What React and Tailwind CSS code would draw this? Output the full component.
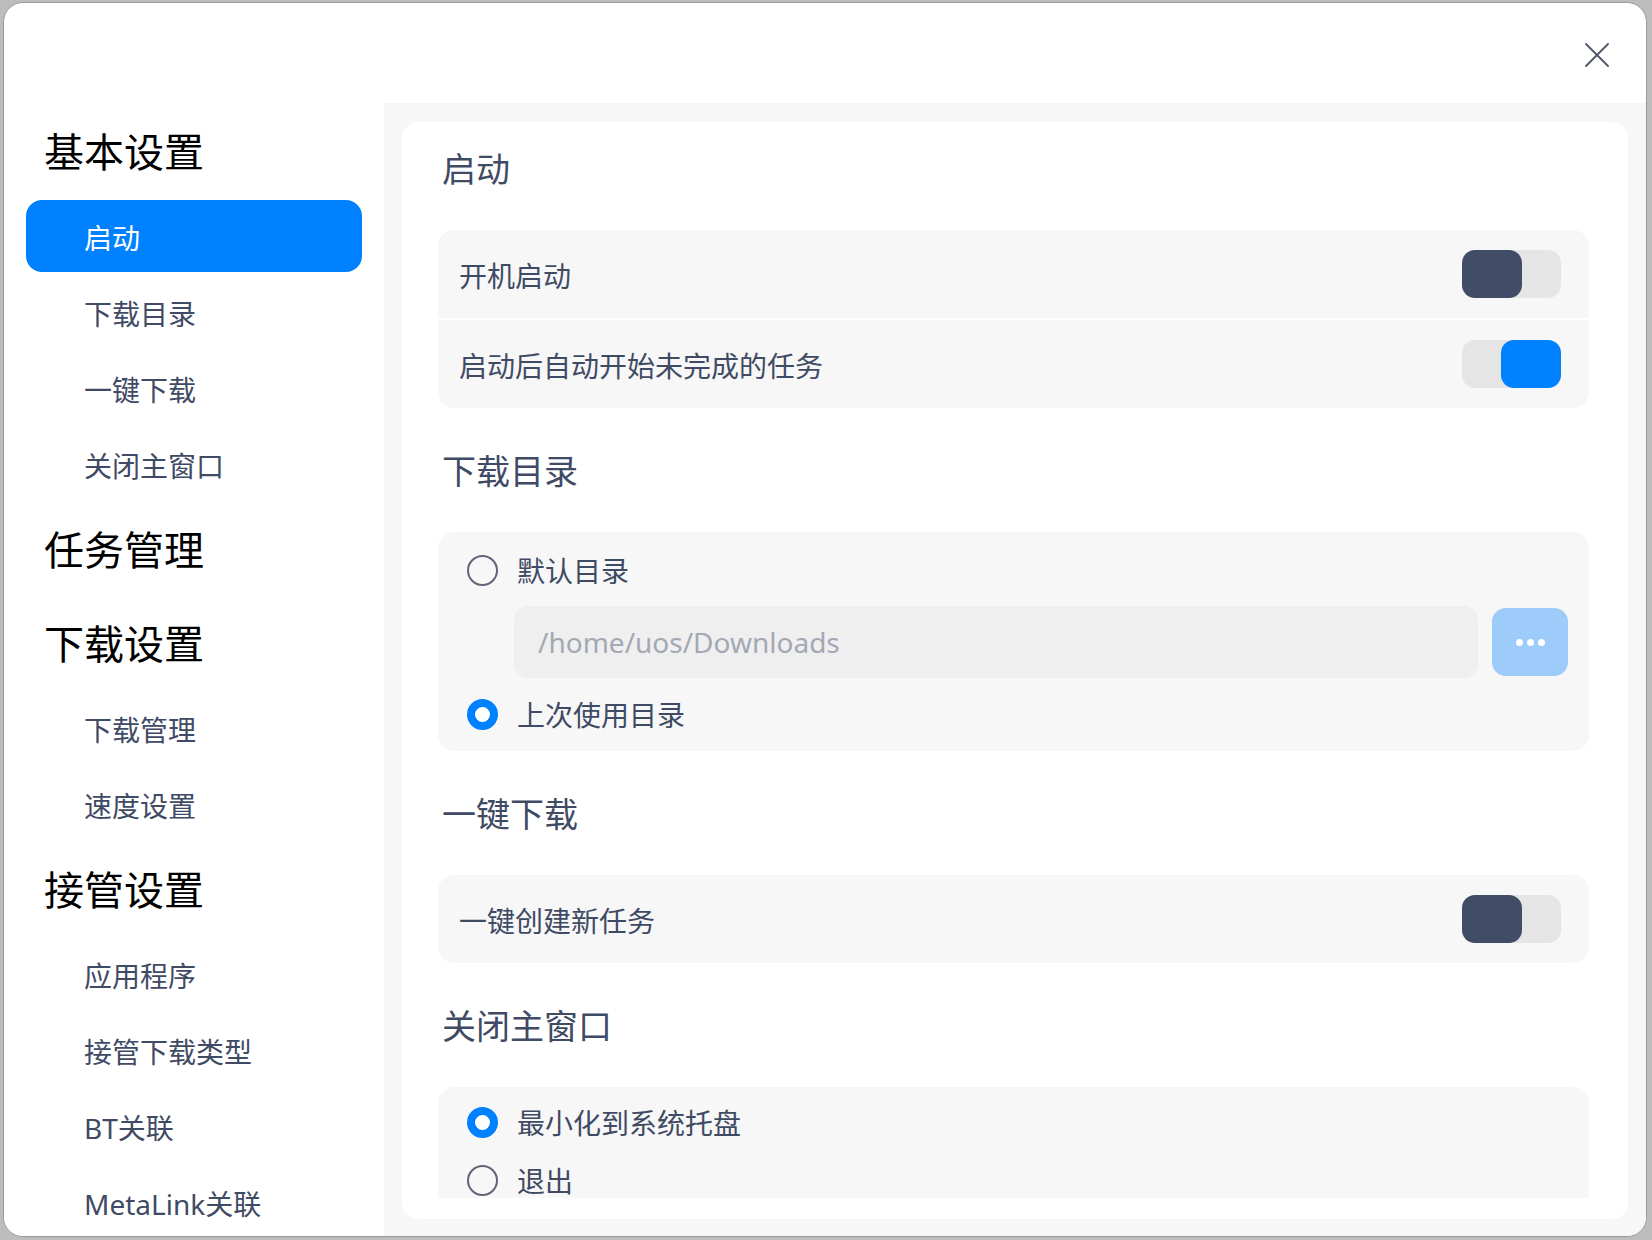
import React from 'react';

const font = "font-['Noto_Sans','Noto_Sans_CJK_SC',sans-serif]";

const nav = [
  { title: '基本设置', items: ['启动', '下载目录', '一键下载', '关闭主窗口'] },
  { title: '任务管理', items: [] },
  { title: '下载设置', items: ['下载管理', '速度设置'] },
  { title: '接管设置', items: ['应用程序', '接管下载类型', 'BT关联', 'MetaLink关联'] },
];

function Toggle({ on }) {
  return (
    <div className="flex h-[48px] w-[99px] rounded-[13px] bg-[#e5e5e5]" style={{ justifyContent: on ? 'flex-end' : 'flex-start' }}>
      <div className={on ? 'h-[48px] w-[60px] rounded-[13px] bg-[#0081ff]' : 'h-[48px] w-[60px] rounded-[13px] bg-[#414c66]'} />
    </div>
  );
}

function Radio({ checked, label }) {
  return (
    <div className="flex h-[36px] items-center gap-[19px]">
      {checked ? (
        <div className="h-[31px] w-[31px] rounded-full border-[8px] border-[#0081ff] bg-white" />
      ) : (
        <div className="h-[31px] w-[31px] rounded-full border-2 border-[#5f6577] bg-transparent" />
      )}
      <span className="pt-[2px] text-[28px] leading-none text-[#3f4a64]">{label}</span>
    </div>
  );
}

function SectionTitle({ children, first }) {
  return (
    <div className={first ? 'mb-[30px] flex h-[62px] items-center pl-[4px]' : 'mb-[30px] mt-[32px] flex h-[62px] items-center pl-[4px]'}>
      <span className="text-[34px] leading-none text-[#3f4a64]">{children}</span>
    </div>
  );
}

function SwitchRow({ label, on }) {
  return (
    <div className="flex h-[88px] items-center justify-between bg-[#f7f7f7] pl-[21px] pr-[28px]">
      <span className="pt-[4px] text-[28px] leading-none text-[#3f4a64]">{label}</span>
      <Toggle on={on} />
    </div>
  );
}

export default function App() {
  return (
    <div className={`h-[1240px] w-[1652px] bg-[#bdbdbd] pb-[3px] pl-[3px] pr-[5px] pt-[2px] ${font}`}>
      <div className="flex h-full w-full flex-col overflow-hidden rounded-[20px] border border-[#9a9a9a] bg-white">
        {/* title bar */}
        <div className="flex h-[100px] shrink-0 justify-end pr-[37px] pt-[40px]">
          <button className="h-[24px] w-[24px]">
            <svg viewBox="0 0 24 24" width="24" height="24" fill="none" stroke="#4f5568" strokeWidth="1.8" strokeLinecap="round">
              <path d="M1 1 L23 23 M23 1 L1 23" />
            </svg>
          </button>
        </div>

        <div className="flex min-h-0 flex-1">
          {/* sidebar */}
          <div className="w-[380px] shrink-0 overflow-hidden bg-white pt-[1px]">
            {nav.map((group) => (
              <div key={group.title}>
                <div className="flex h-[94px] items-center pl-[40px]">
                  <span className="pt-[2px] text-[40px] leading-none text-black">{group.title}</span>
                </div>
                {group.items.map((item) => (
                  <div key={item} className="px-[22px] py-[2px]">
                    <div className={item === '启动' ? 'flex h-[72px] items-center rounded-[16px] bg-[#0081ff] pl-[58px]' : 'flex h-[72px] items-center pl-[58px]'}>
                      <span className={item === '启动' ? 'pt-[3px] text-[28px] leading-none text-white' : 'pt-[3px] text-[28px] leading-none text-[#3f4a64]'}>{item}</span>
                    </div>
                  </div>
                ))}
              </div>
            ))}
          </div>

          {/* content */}
          <div className="min-w-0 flex-1 bg-[#f7f7f7] pb-[17px] pl-[18px] pr-[18px] pt-[19px]">
            <div className="flex h-full flex-col rounded-[16px] bg-white pb-[21px]">
              <div className="min-h-0 flex-1 overflow-hidden pl-[36px] pr-[39px] pt-[16px]">
                <SectionTitle first>启动</SectionTitle>
                <div className="flex flex-col gap-[2px] overflow-hidden rounded-[16px]">
                  <SwitchRow label="开机启动" on={false} />
                  <SwitchRow label="启动后自动开始未完成的任务" on />
                </div>

                <SectionTitle>下载目录</SectionTitle>
                <div className="rounded-[16px] bg-[#f7f7f7] pb-[19px] pl-[29px] pr-[21px] pt-[20px]">
                  <Radio label="默认目录" />
                  <div className="ml-[47px] mt-[18px] flex items-center gap-[14px]">
                    <div className="flex h-[72px] flex-1 items-center rounded-[14px] bg-[#efefef] pl-[24px]">
                      <span className="text-[28px] leading-none text-[#a3a8b4]">/home/uos/Downloads</span>
                    </div>
                    <button className="flex h-[68px] w-[76px] items-center justify-center gap-[4px] rounded-[14px] bg-[#9dcbfa]">
                      <span className="h-[7px] w-[7px] rounded-full bg-white" />
                      <span className="h-[7px] w-[7px] rounded-full bg-white" />
                      <span className="h-[7px] w-[7px] rounded-full bg-white" />
                    </button>
                  </div>
                  <div className="mt-[18px]">
                    <Radio checked label="上次使用目录" />
                  </div>
                </div>

                <SectionTitle>一键下载</SectionTitle>
                <div className="flex h-[88px] items-center justify-between rounded-[16px] bg-[#f7f7f7] pl-[21px] pr-[28px]">
                  <span className="pt-[4px] text-[28px] leading-none text-[#3f4a64]">一键创建新任务</span>
                  <Toggle on={false} />
                </div>

                <SectionTitle>关闭主窗口</SectionTitle>
                <div className="rounded-[16px] bg-[#f7f7f7] pb-[20px] pl-[29px] pt-[17px]">
                  <Radio checked label="最小化到系统托盘" />
                  <div className="mt-[22px]">
                    <Radio label="退出" />
                  </div>
                </div>
              </div>
            </div>
          </div>
        </div>
      </div>
    </div>
  );
}
